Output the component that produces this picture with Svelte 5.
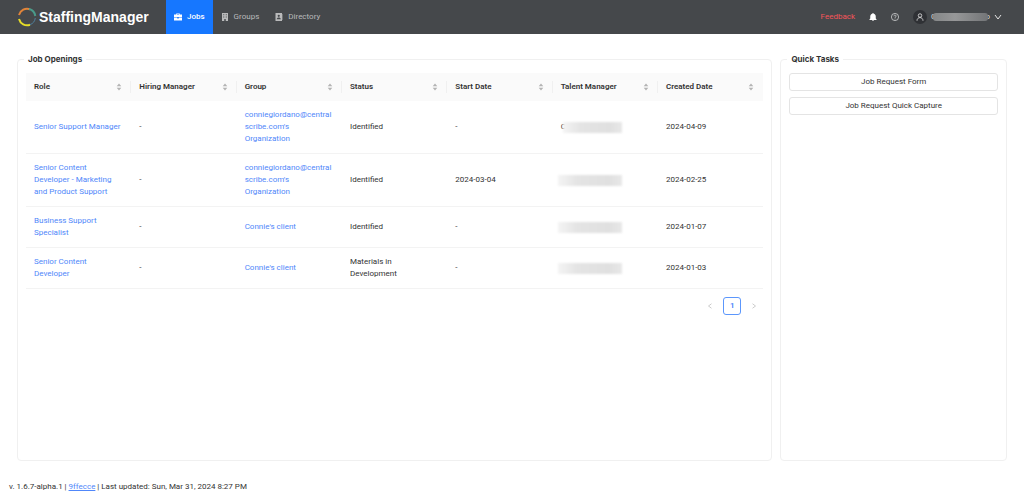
<script>
  let page = $state('jobs')

  const columns = ['Role', 'Hiring Manager', 'Group', 'Status', 'Start Date', 'Talent Manager', 'Created Date']

  const jobs = [
    { role: 'Senior Support Manager', group: "conniegiordano@centralscribe.com's Organization", status: 'Identified', start: '-', initial: 'C', created: '2024-04-09' },
    { role: 'Senior Content Developer - Marketing and Product Support', group: "conniegiordano@centralscribe.com's Organization", status: 'Identified', start: '2024-03-04', created: '2024-02-25' },
    { role: 'Business Support Specialist', group: "Connie's client", status: 'Identified', start: '-', created: '2024-01-07' },
    { role: 'Senior Content Developer', group: "Connie's client", status: 'Materials in Development', start: '-', created: '2024-01-03' }
  ]

  const tasks = ['Job Request Form', 'Job Request Quick Capture']
</script>

<div class="page">
  <header>
    <a class="logo" href="#home">
      <svg viewBox="0 0 20 20" width="20" height="20" fill="none" stroke-width="2">
        <path d="M2 8A8.3 8.3 0 0 1 13 2.300" stroke="#e0843a" />
        <path d="M12 2A8.300 8.300 0 0 1 18.300 9" stroke="#4a9a8a" />
        <path d="M18.300 11A8.300 8.300 0 0 1 13 17.700" stroke="#4f7f9c" stroke-width="1" />
        <path d="M2 12A8.300 8.300 0 0 0 13 17.700" stroke="#e6dc28" />
      </svg>
      <span>StaffingManager</span>
    </a>

    <nav>
      <a href="#jobs" class:active={page === 'jobs'} onclick={() => (page = 'jobs')}>
        <svg viewBox="0 0 16 16" width="8" height="8">
          <path fill="currentColor" fill-rule="evenodd" d="M4.500 3V1h7v2H16v6H9.500V8h-3v1H0V3zM6 3h4v-.8H6zM0 10h6.500v1h3v-1H16v5H0z" />
        </svg>
        Jobs
      </a>
      <a href="#groups" class:active={page === 'groups'} onclick={() => (page = 'groups')}>
        <svg viewBox="0 0 16 16" width="8" height="8">
          <path fill="currentColor" fill-rule="evenodd" d="M2 0h12v16H9.500v-4h-3v4H2zM4.500 2.500v2h2v-2zm5 0v2h2v-2zm-5 4.500v2h2V7zm5 0v2h2V7z" />
        </svg>
        Groups
      </a>
      <a href="#directory" class:active={page === 'directory'} onclick={() => (page = 'directory')}>
        <svg viewBox="0 0 16 16" width="8" height="8">
          <path fill="currentColor" fill-rule="evenodd" d="M1 0h13v3h1.500v2H14v2h1.500v2H14v2h1.500v2H14v3H1zM7.500 3.500a2.200 2.200 0 1 0 0 4.400 2.200 2.200 0 0 0 0-4.400zM3.500 12.500h8c0-5-8-5-8 0z" />
        </svg>
        Directory
      </a>
    </nav>

    <div class="tools">
      <a class="feedback" href="#feedback">Feedback</a>
      <button aria-label="Notifications">
        <svg viewBox="0 0 16 16" width="8" height="8" fill="#fff">
          <path d="M7 0h2v1.500c3 .5 4.500 2.500 4.500 5.500v4l1.500 1.500V14H1v-1.500L2.500 11V7C2.500 4 4 2 7 1.500zM6 14.500h4L9 16H7z" />
        </svg>
      </button>
      <button aria-label="Help">
        <svg viewBox="0 0 16 16" width="8" height="8" fill="none" stroke="#d8d9da" stroke-width="1.500">
          <circle cx="8" cy="8" r="7.200" />
          <path d="M5.800 6.500C5.800 3.500 10.200 3.500 10.200 6.300 10.200 8 8 8 8 9.800M8 11v1.600" />
        </svg>
      </button>
      <button class="user" aria-label="Account">
        <span class="avatar">
          <svg viewBox="0 0 16 16" width="8" height="8" fill="none" stroke="#e4e4e4" stroke-width="1.600">
            <circle cx="8" cy="5" r="3.500" />
            <path d="M2 15.500C2 7 14 7 14 15.500" />
          </svg>
        </span>
        <span class="name">C<span class="smudge"></span>o</span>
        <svg viewBox="0 0 8 8" width="8" height="8" fill="none" stroke="#e4e4e4">
          <path d="M1 2l3 4 3-4" />
        </svg>
      </button>
    </div>
  </header>

  <main>
    <fieldset>
      <legend>Job Openings</legend>
      <table>
        <thead>
          <tr>
            {#each columns as column}
              <th>
                <div class="head">
                  {column}
                  <svg viewBox="0 0 6 8" width="6" height="8" fill="#b4b4b4">
                    <path d="M3 .5l2.300 2.700H.7zM3 7.500l2.300-2.700H.7z" />
                  </svg>
                </div>
              </th>
            {/each}
          </tr>
        </thead>
        <tbody>
          {#each jobs as job}
            <tr>
              <td><a href="#job">{job.role}</a></td>
              <td>-</td>
              <td><a href="#group">{job.group}</a></td>
              <td>{job.status}</td>
              <td>{job.start}</td>
              <td><span class="hidden-name">{job.initial ?? ''}<span class="smudge"></span></span></td>
              <td>{job.created}</td>
            </tr>
          {/each}
        </tbody>
      </table>

      <div class="pagination">
        <button aria-label="Previous page" disabled>
          <svg viewBox="0 0 8 8" width="6" height="6" fill="none" stroke="currentColor"><path d="M6 1L2 4l4 3" /></svg>
        </button>
        <button class="current">1</button>
        <button aria-label="Next page" disabled>
          <svg viewBox="0 0 8 8" width="6" height="6" fill="none" stroke="currentColor"><path d="M2 1l4 3-4 3" /></svg>
        </button>
      </div>
    </fieldset>

    <fieldset>
      <legend>Quick Tasks</legend>
      <div class="list">
        {#each tasks as task}
          <button>{task}</button>
        {/each}
      </div>
    </fieldset>
  </main>

  <footer>v. 1.6.7-alpha.1 | <a href="#build">9ffecce</a> | Last updated: Sun, Mar 31, 2024 8:27 PM</footer>
</div>

<style>
  :global(body) {
    margin: 0;
    background: #fff;
  }

  .page {
    display: flex;
    flex-direction: column;
    min-height: 100vh;
    font: 8px/12px Roboto, Inter, sans-serif;
    color: #333;
  }

  .page :global(*) {
    box-sizing: border-box;
  }

  a {
    color: #5087fa;
    text-decoration: none;
  }

  button {
    padding: 0;
    border: none;
    background: none;
    font: inherit;
    color: inherit;
    cursor: pointer;
  }

  svg {
    display: block;
    flex: none;
  }

  header {
    display: flex;
    height: 34px;
    padding: 0 22px 0 17px;
    background: #45484b;
  }

  .logo {
    display: flex;
    align-items: center;
    gap: 2px;
    width: 149px;
    font: bold 14px/20px "Liberation Sans", sans-serif;
    color: #fff;
  }

  nav {
    display: flex;
  }

  nav a {
    display: flex;
    align-items: center;
    gap: 5px;
    padding: 0 8px;
    color: #b9babb;
  }

  nav a.active {
    background: #1677ff;
    font-weight: 500;
    color: #fff;
  }

  .tools {
    display: flex;
    align-items: center;
    gap: 14px;
    margin-left: auto;
  }

  .feedback {
    color: #f5555a;
  }

  .user {
    display: flex;
    align-items: center;
    gap: 4px;
    color: #ddd;
  }

  .avatar {
    display: flex;
    align-items: center;
    justify-content: center;
    width: 14px;
    height: 14px;
    border-radius: 50%;
    background: #2f3135;
  }

  .name {
    display: flex;
    align-items: center;
    width: 59px;
  }

  .name .smudge {
    position: relative;
    flex: 1;
    height: 8px;
    margin: 0 -3px;
    border-radius: 3px;
    background: linear-gradient(90deg, #858788, #969798 40%, #737577);
  }

  main {
    display: grid;
    grid-template-columns: 10fr 3fr;
    flex: 1;
    gap: 8px;
    padding: 19px 17px 0;
  }

  fieldset {
    min-width: 0;
    margin: 0;
    padding: 8px;
    border: 1px solid #f0f0f0;
    border-radius: 4px;
  }

  legend {
    margin-left: -2px;
    padding: 0 4px;
    font: 700 8px/12px Inter, sans-serif;
  }

  table {
    width: 100%;
    table-layout: fixed;
    border-spacing: 0;
  }

  th {
    height: 28px;
    padding: 0;
    background: #fafafa;
    font-weight: 600;
    text-align: left;
  }

  .head {
    display: flex;
    align-items: center;
    justify-content: space-between;
    padding: 0 8px;
    border-right: 1px solid #f0f0f0;
  }

  th:last-child .head {
    border-right-color: transparent;
  }

  td {
    padding: 8px;
    border-bottom: 1px solid #f3f3f3;
    overflow-wrap: anywhere;
  }

  .hidden-name {
    display: flex;
    align-items: center;
    width: 61px;
  }

  .hidden-name .smudge {
    position: relative;
    flex: 1;
    height: 11px;
    margin-left: -3px;
    background: linear-gradient(90deg, #f4f4f4, #e4e4e4 30%, #e0e0e0 80%, #e8e8e8);
    filter: blur(1px);
  }

  .pagination {
    display: flex;
    justify-content: flex-end;
    gap: 4px;
    margin-top: 8px;
  }

  .pagination button {
    display: flex;
    align-items: center;
    justify-content: center;
    width: 18px;
    height: 18px;
    border-radius: 3px;
    color: #bbb;
  }

  .pagination .current {
    border: 1px solid #5c97fc;
    font-weight: 600;
    color: #3f7ffb;
  }

  .list {
    display: flex;
    flex-direction: column;
    gap: 6px;
  }

  .list button {
    height: 18px;
    border: 1px solid #e4e4e4;
    border-radius: 3px;
  }

  footer {
    padding: 20px 9px 4px;
  }

  footer a {
    text-decoration: underline;
  }
</style>
